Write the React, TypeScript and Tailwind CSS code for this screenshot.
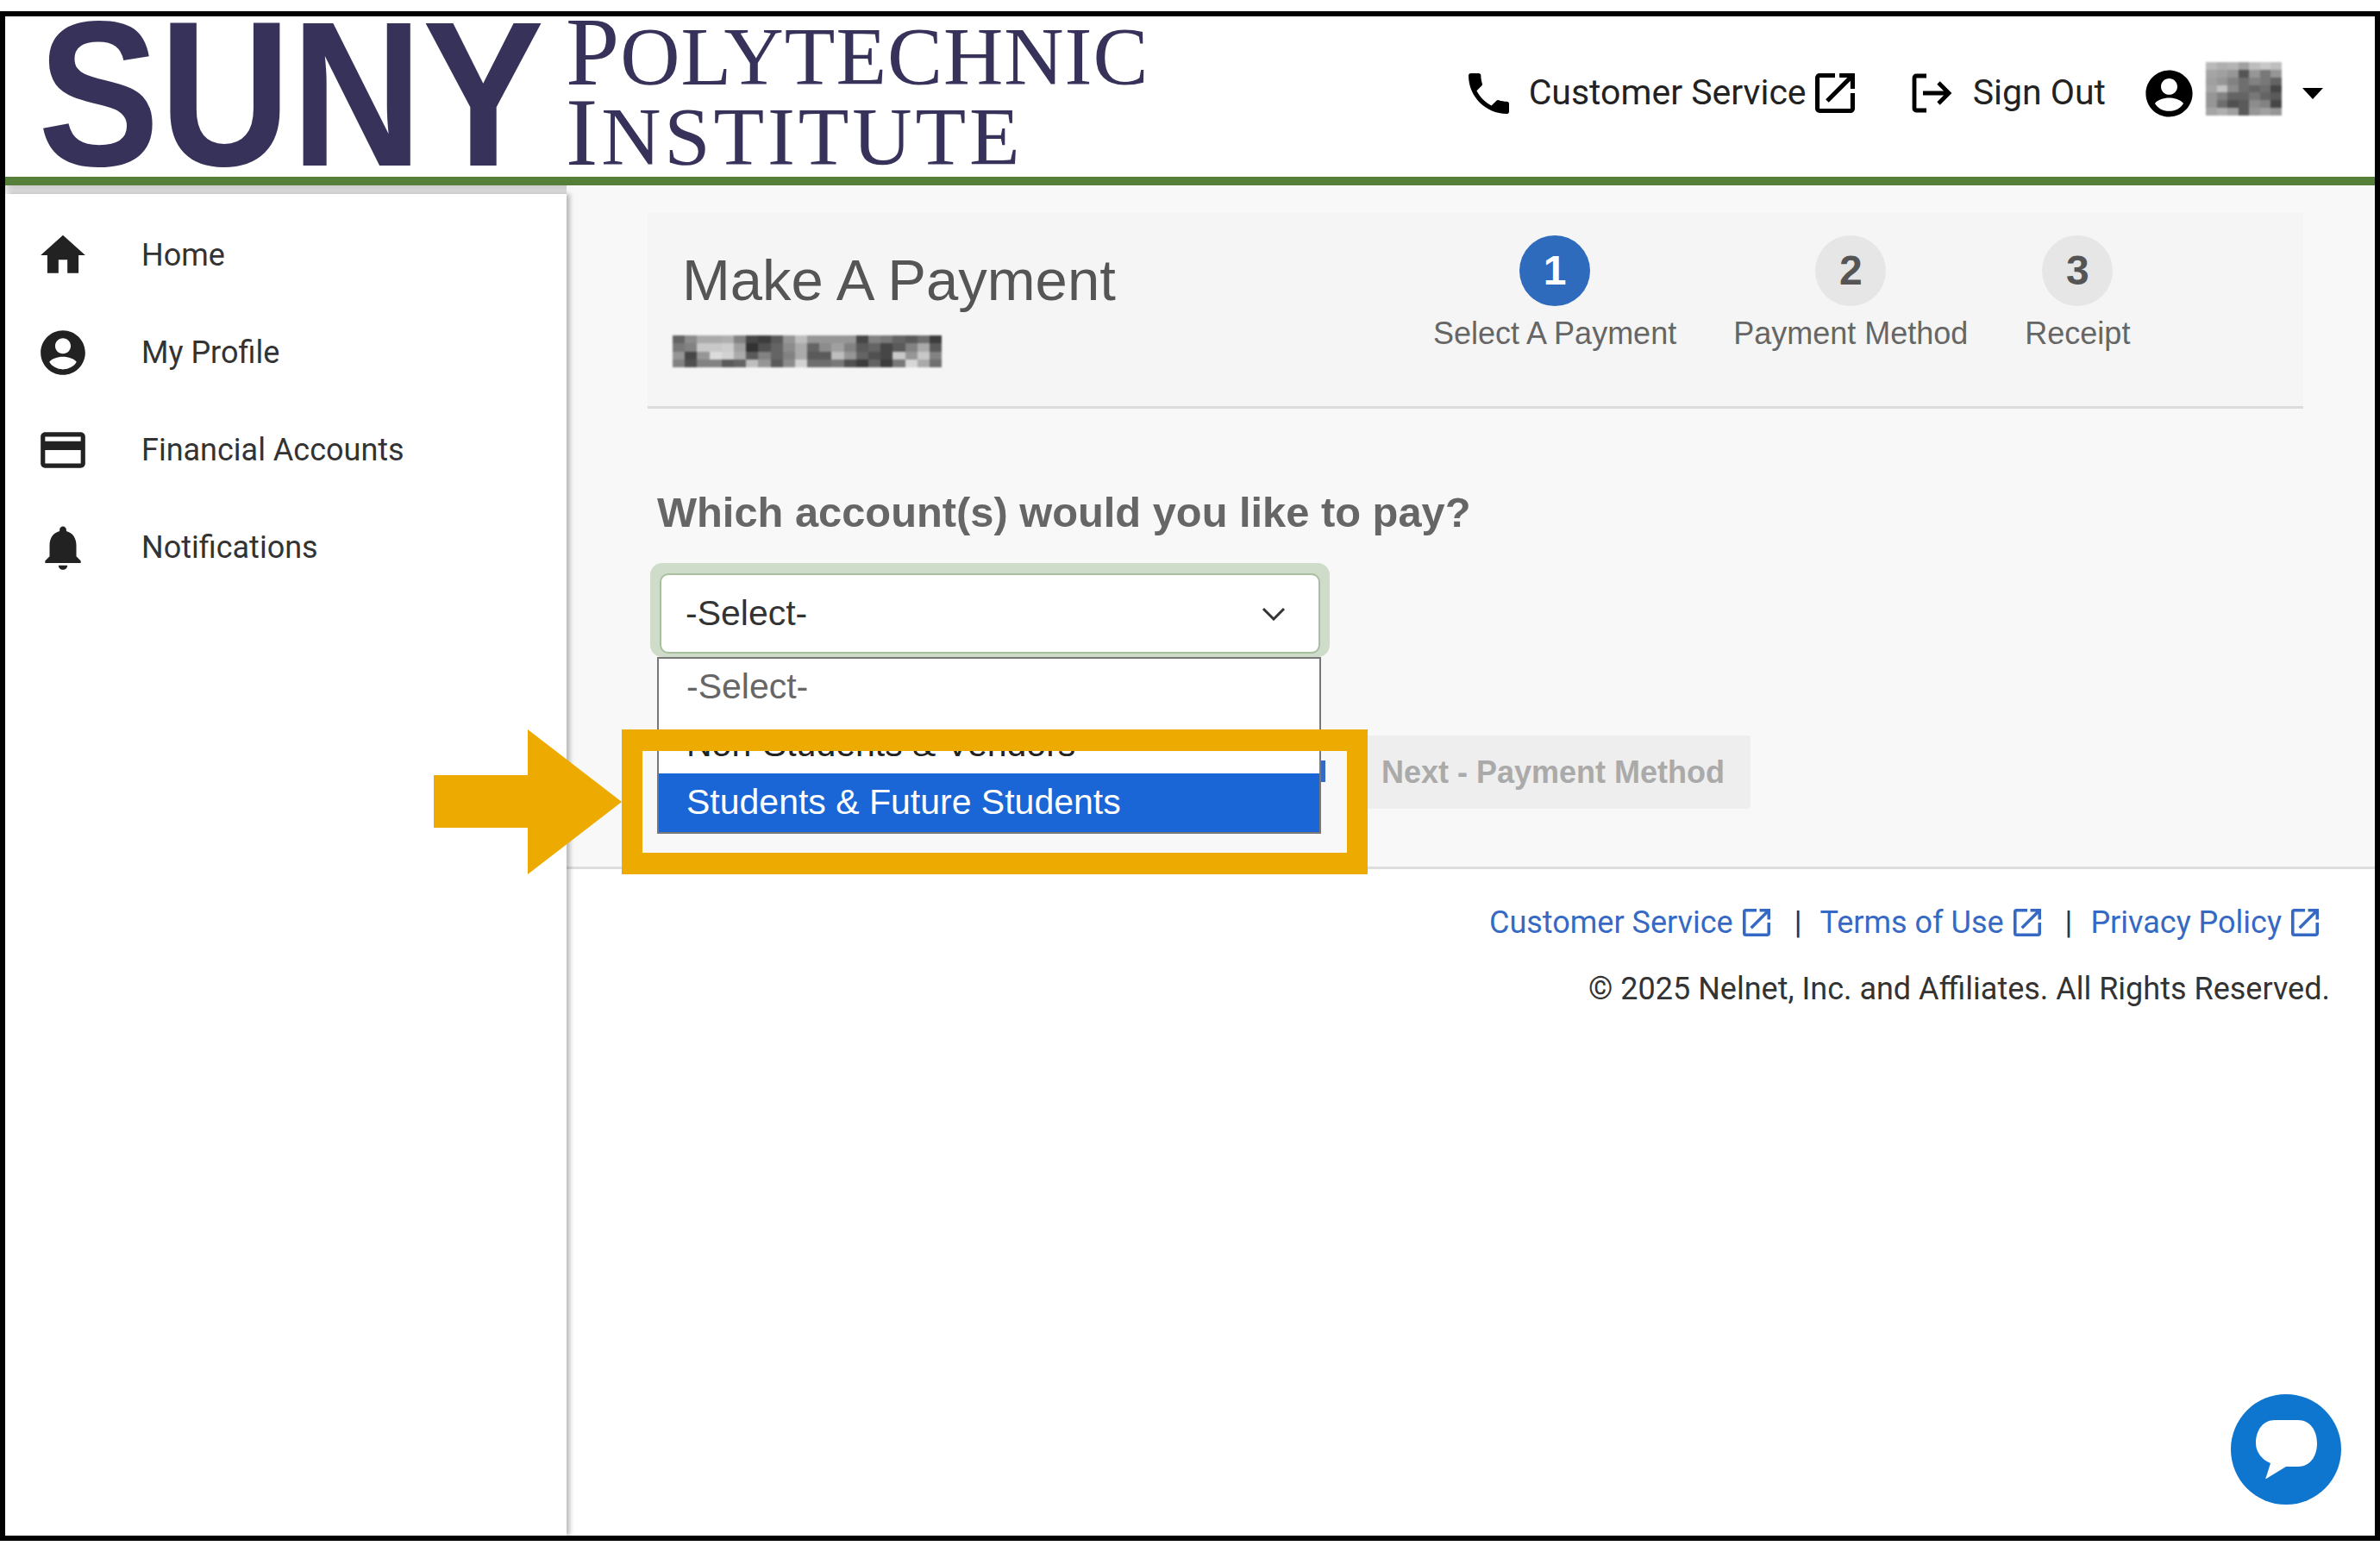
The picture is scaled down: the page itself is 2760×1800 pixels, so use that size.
const sans = "font-['Liberation_Sans',Arial,sans-serif]"
const roboto = "font-['Roboto',sans-serif]"

// greys of the blurred-out text, row by row
const nameBlur = [
  [100, 140, 170, 170, 175, 130, 70, 60, 90, 150, 190, 150, 150, 150, 150, 70, 130, 120, 100, 90, 110, 60],
  [120, 130, 200, 200, 205, 160, 50, 80, 100, 140, 170, 100, 140, 160, 130, 90, 100, 70, 90, 130, 170, 90],
  [150, 70, 150, 220, 210, 170, 90, 130, 100, 130, 170, 90, 90, 190, 150, 100, 80, 70, 200, 150, 200, 130],
  [130, 80, 130, 130, 90, 100, 190, 150, 90, 140, 210, 110, 110, 120, 80, 60, 100, 60, 120, 215, 170, 110],
]
const userBlur = [
  [185, 175, 180, 160, 190, 200, 190],
  [165, 160, 150, 85, 150, 120, 150],
  [160, 150, 130, 110, 130, 120, 100],
  [165, 195, 140, 110, 100, 110, 70],
  [150, 130, 100, 100, 120, 100, 90],
  [150, 110, 80, 90, 140, 130, 70],
  [165, 175, 160, 90, 150, 160, 150],
]

function Mosaic({ rows, className }: { rows: number[][]; className: string }) {
  return (
    <div className={`flex flex-col overflow-hidden ${className}`}>
      {rows.map((row, i) => (
        <div key={i} className='flex flex-1'>
          {row.map((g, j) => (
            <div key={j} className='flex-1' style={{ backgroundColor: `rgb(${g},${g},${g})` }} />
          ))}
        </div>
      ))}
    </div>
  )
}

function HomeIcon() {
  return (
    <svg viewBox='0 0 24 24' className='h-[62px] w-[62px] fill-[#222]'>
      <path d='M10 20v-6h4v6h5v-8h3L12 3 2 12h3v8z' />
    </svg>
  )
}

function ProfileIcon({ className }: { className: string }) {
  return (
    <svg viewBox='0 0 24 24' className={className}>
      <path d='M12 2C6.48 2 2 6.48 2 12s4.48 10 10 10 10-4.48 10-10S17.52 2 12 2zm0 3.5c1.93 0 3.5 1.57 3.5 3.5s-1.57 3.5-3.5 3.5S8.5 10.93 8.5 9 10.07 5.5 12 5.5zm0 14c-2.7 0-5.1-1.4-6.1-3.3 1-1.5 3.6-2.4 6.1-2.4s5.1.9 6.1 2.4c-1 1.9-3.4 3.3-6.1 3.3z' />
    </svg>
  )
}

function CardIcon() {
  return (
    <svg viewBox='0 0 24 24' className='h-[62px] w-[62px] fill-[#222]'>
      <path d='M20 4H4c-1.11 0-2 .89-2 2v12c0 1.11.89 2 2 2h16c1.11 0 2-.89 2-2V6c0-1.11-.89-2-2-2zm0 14H4v-6h16v6zm0-10H4V6h16v2z' />
    </svg>
  )
}

function BellIcon() {
  return (
    <svg viewBox='0 0 24 24' className='h-[62px] w-[62px] fill-[#222]'>
      <path d='M12 22c1.1 0 2-.9 2-2h-4c0 1.1.9 2 2 2zm6-6v-5c0-3.07-1.63-5.64-4.5-6.32V4c0-.83-.67-1.5-1.5-1.5s-1.5.67-1.5 1.5v.68C7.64 5.36 6 7.92 6 11v5l-2 2v1h16v-1l-2-2z' />
    </svg>
  )
}

function LaunchIcon({ className }: { className: string }) {
  return (
    <svg viewBox='3 3 18 18' className={`shrink-0 fill-current ${className}`}>
      <path d='M19 19H5V5h7V3H5a2 2 0 0 0-2 2v14a2 2 0 0 0 2 2h14c1.1 0 2-.9 2-2v-7h-2v7zM14 3v2h3.59l-9.83 9.83 1.41 1.41L19 6.41V10h2V3h-7z' />
    </svg>
  )
}

function SideLink({ icon, label }: { icon: React.ReactNode; label: string }) {
  return (
    <li className='flex h-[113px] items-center'>
      <span className='flex w-[62px] justify-center'>{icon}</span>
      <span className={`ml-[60px] text-[36px] text-[#333] ${roboto}`}>{label}</span>
    </li>
  )
}

function Step({ n, label, active }: { n: number; label: string; active?: boolean }) {
  return (
    <div className='flex flex-col items-center'>
      <div className={`flex h-[82px] w-[82px] items-center justify-center rounded-full text-[48px] font-bold ${active ? 'bg-[#2f6bbd] text-white' : 'bg-[#e6e6e6] text-[#555]'}`}>
        {n}
      </div>
      <div className='mt-[11px] text-[36px] leading-[42px] text-[#666]'>{label}</div>
    </div>
  )
}

function FooterLink({ label }: { label: string }) {
  return (
    <a className='flex items-center gap-[11px] text-[#3569c4]'>
      {label}
      <LaunchIcon className='h-[32px] w-[32px]' />
    </a>
  )
}

export default function App() {
  return (
    <div className='relative h-[1800px] w-[2760px] bg-white py-[13px]'>
      <div className='relative flex h-[1774px] flex-col border-x-[6px] border-y-[6px] border-black'>
        {/* Header */}
        <header className='flex h-[196px] items-center justify-between border-b-[10px] border-[#567f3a] shadow-[0_10px_10px_rgba(0,0,0,0.2)]'>
          <div className='mb-[6px] flex items-center pl-[38px] text-[#37325a]'>
            <div className='h-[180px] w-[600px]'>
              <div className={`origin-left scale-x-[0.88] text-[240px] leading-[180px] font-bold ${sans}`}>SUNY</div>
            </div>
            <div className="mt-[6px] ml-[12px] font-['Liberation_Serif',serif] text-[96px] leading-[93px]">
              <div className='tracking-[0.01em]'><span className='text-[112px] leading-[0]'>P</span>OLYTECHNIC</div>
              <div className='tracking-[0.04em]'><span className='text-[112px] leading-[0]'>I</span>NSTITUTE</div>
            </div>
          </div>
          <nav className={`flex items-center pr-[60px] pb-[8px] text-[41px] text-[#222] ${roboto}`}>
            <svg viewBox='3 3 18 18' className='h-[47px] w-[49px] fill-black'>
              <path d='M6.62 10.79c1.44 2.83 3.76 5.14 6.59 6.59l2.2-2.2c.27-.27.67-.36 1.02-.24 1.12.37 2.33.57 3.57.57.55 0 1 .45 1 1V20c0 .55-.45 1-1 1-9.39 0-17-7.61-17-17 0-.55.45-1 1-1h3.5c.55 0 1 .45 1 1 0 1.25.2 2.45.57 3.57.11.35.03.74-.25 1.02l-2.2 2.2z' />
            </svg>
            <span className='ml-[22px]'>Customer Service</span>
            <LaunchIcon className='ml-[10px] h-[46px] w-[46px] text-black' />
            <svg viewBox='0 0 24 24' className='ml-[65px] h-[48px] w-[48px] fill-none stroke-black stroke-[2.4]'>
              <path d='M9 2H3a1 1 0 0 0-1 1v18a1 1 0 0 0 1 1h6M7 12h15M16 6l6 6-6 6' />
            </svg>
            <span className='ml-[24px]'>Sign Out</span>
            <ProfileIcon className='ml-[41px] h-[65px] w-[65px] fill-black' />
            <Mosaic rows={userBlur} className='mb-[10px] ml-[10px] h-[62px] w-[88px] blur-[1px]' />
            <span className='ml-[24px] h-0 w-0 border-x-[12px] border-t-[13px] border-x-transparent border-t-black' />
          </nav>
        </header>

        <div className='flex flex-1'>
          {/* Sidebar */}
          <aside className='z-10 mt-[10px] w-[651px] shrink-0 bg-white pt-[14px] pl-[36px] shadow-[4px_0_5px_rgba(0,0,0,0.25)]'>
            <ul>
              <SideLink icon={<HomeIcon />} label='Home' />
              <SideLink icon={<ProfileIcon className='h-[62px] w-[62px] fill-[#222]' />} label='My Profile' />
              <SideLink icon={<CardIcon />} label='Financial Accounts' />
              <SideLink icon={<BellIcon />} label='Notifications' />
            </ul>
          </aside>

          {/* Main */}
          <main className='flex-1'>
            <div className={`h-[793px] border-b-[3px] border-[#dedede] bg-[#f8f8f8] pt-[32px] pr-[83px] pl-[94px] ${sans}`}>
              <div className='flex h-[227px] border-b-[3px] border-[#dcdcdc] bg-[#f5f5f5]'>
                <div className='w-[911px] shrink-0 pt-[40px]'>
                  <h1 className='ml-[40px] text-[67px] leading-[76px] text-[#555]'>Make A Payment</h1>
                  <Mosaic rows={nameBlur} className='mt-[26px] ml-[29px] h-[37px] w-[312px] blur-[1px]' />
                </div>
                <div className='flex gap-[66px] pt-[26px]'>
                  <Step n={1} label='Select A Payment' active />
                  <Step n={2} label='Payment Method' />
                  <Step n={3} label='Receipt' />
                </div>
              </div>

              <h2 className='mt-[91px] ml-[11px] text-[48.8px] leading-[58px] font-bold text-[#666]'>Which account(s) would you like to pay?</h2>

              {/* Select with its open list */}
              <div className='relative mt-[30px] ml-[3px] w-[788px]'>
                <div className='h-[109px] rounded-[14px] bg-[#cfdcc9] px-[11px] pt-[12px] pb-[4px]'>
                  <div className='flex h-full items-center justify-between rounded-[10px] border-2 border-[#a8bfa0] bg-white pr-[38px] pl-[28px] text-[41px] text-[#333]'>
                    -Select-
                    <svg viewBox='0 0 28 16' className='h-[16px] w-[28px] fill-none stroke-[#333] stroke-[3]'>
                      <path d='M2 2l12 12L26 2' />
                    </svg>
                  </div>
                </div>
                <ul className='absolute top-[109px] left-[8px] z-20 h-[205px] w-[770px] overflow-hidden border-2 border-[#777] bg-white text-[41px]'>
                  <li className='flex h-[66px] items-center pl-[32px] text-[#666]'>-Select-</li>
                  <li className='flex h-[67px] items-center pl-[32px] text-[#222]'>Non-Students &amp; Vendors</li>
                  <li className='flex h-[68px] items-center bg-[#1a66d6] pl-[32px] text-white'>Students &amp; Future Students</li>
                </ul>
              </div>

              {/* Buttons */}
              <div className='mt-[91px] ml-[3px] flex'>
                <div className='ml-[778px] h-[25px] w-[5px] translate-y-[29px] bg-[#3569c4]' />
                <button className='ml-[28px] flex h-[85px] w-[465px] items-center justify-end rounded-[4px] bg-[#eeeeee] pr-[30px] text-[36px] font-bold text-[#aaaaaa]'>
                  Next - Payment Method
                </button>
              </div>
            </div>

            {/* Footer */}
            <footer className={`flex flex-col items-end pt-[40px] pr-[52px] text-[36px] ${roboto}`}>
              <div className='mr-[13px] flex items-center leading-[44px]'>
                <FooterLink label='Customer Service' />
                <span className='mr-[21px] ml-[28px] text-[#333]'>|</span>
                <FooterLink label='Terms of Use' />
                <span className='mr-[21px] ml-[28px] text-[#333]'>|</span>
                <FooterLink label='Privacy Policy' />
              </div>
              <div className='mt-[33px] leading-[44px] text-[#333]'>© 2025 Nelnet, Inc. and Affiliates. All Rights Reserved.</div>
            </footer>
          </main>
        </div>

        {/* Chat bubble */}
        <button className='absolute right-[39px] bottom-[36px] flex h-[128px] w-[128px] items-center justify-center rounded-full bg-[#0f76cf]'>
          <svg viewBox='0 0 71 68' className='h-[68px] w-[71px] fill-white'>
            <path d='M22 0h27c13 0 22 11 22 27S62 54 49 54H35L12 68c-1 0-1-1 0-2l5-16C7 46 0 37 0 27 0 11 9 0 22 0z' />
          </svg>
        </button>
      </div>

      {/* Annotation: arrow and frame around the option to pick */}
      <div className='absolute top-[846px] left-[721px] z-30 h-[168px] w-[865px] border-x-[24px] border-y-[25px] border-[#edaa00]' />
      <svg viewBox='0 0 218 168' className='absolute top-[846px] left-[503px] z-30 h-[168px] w-[218px] fill-[#edaa00]'>
        <path d='M0 53h109V0l109 84-109 84v-54H0z' />
      </svg>
    </div>
  )
}
